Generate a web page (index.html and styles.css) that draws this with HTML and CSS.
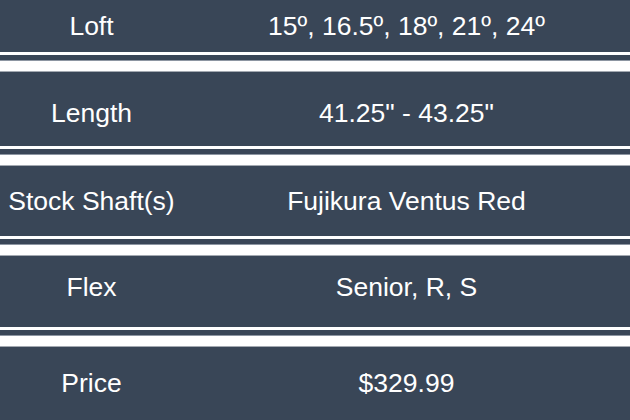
FILE: index.html
```html
<!DOCTYPE html>
<html>
<head>
<meta charset="utf-8">
<link rel="stylesheet" href="styles.css">
</head>
<body>
<div class="specs">
  <div class="row r1"><div class="label">Loft</div><div class="value">15º, 16.5º, 18º, 21º, 24º</div></div>
  <div class="sep"></div>
  <div class="row r2"><div class="label">Length</div><div class="value">41.25" - 43.25"</div></div>
  <div class="sep"></div>
  <div class="row r3"><div class="label">Stock Shaft(s)</div><div class="value">Fujikura Ventus Red</div></div>
  <div class="sep"></div>
  <div class="row r4"><div class="label">Flex</div><div class="value">Senior, R, S</div></div>
  <div class="sep"></div>
  <div class="row r5"><div class="label">Price</div><div class="value">$329.99</div></div>
</div>
</body>
</html>
```
FILE: styles.css
```css
html, body {
  margin: 0;
  padding: 0;
  background: #ffffff;
}
.specs {
  width: 630px;
  height: 420px;
  display: flex;
  flex-direction: column;
  font-family: "Liberation Sans", Arial, sans-serif;
  font-size: 26.5px;
  color: #ffffff;
}
.row {
  display: flex;
  align-items: center;
  background: #394657;
  box-sizing: border-box;
}
.label {
  width: 183px;
  text-align: center;
  flex: none;
}
.value {
  flex: 1;
  text-align: center;
}
.r1 { height: 52px; }
.r2 { height: 74px; padding-top: 8px; }
.r3 { height: 70px; }
.r4 { height: 71px; padding-bottom: 9px; }
.r5 { height: 72px; flex: 1; }
.sep {
  height: 20px;
  flex: none;
  box-sizing: border-box;
  background: #ffffff;
  border-bottom: 1px solid #a3a9b1;
  display: flex;
  flex-direction: column;
  padding-top: 3px;
}
.sep::before {
  content: "";
  display: block;
  height: 5px;
  background: #394657;
  border-bottom: 1px solid #8d96a2;
}
```
